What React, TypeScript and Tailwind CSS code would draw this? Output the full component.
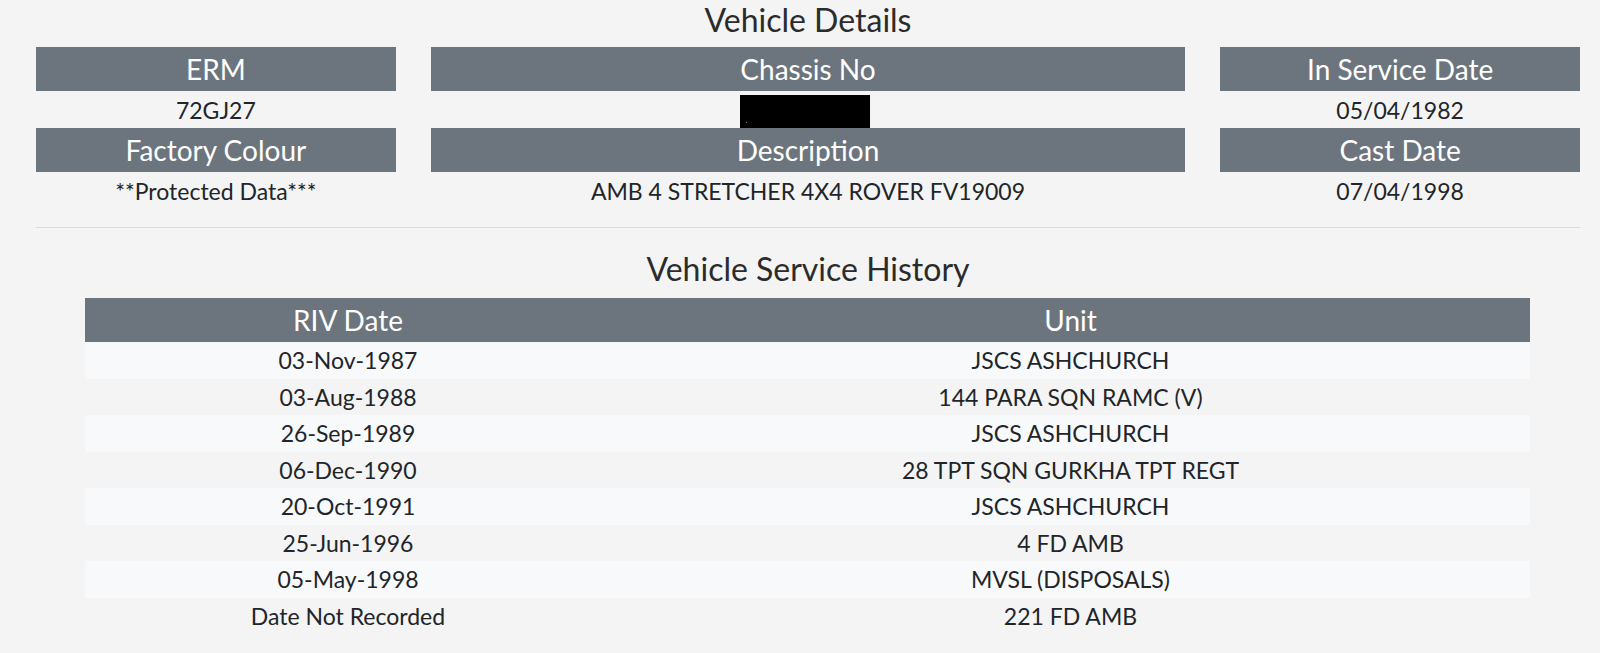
import React from "react";

const history: [string, string][] = [
  ["03-Nov-1987", "JSCS ASHCHURCH"],
  ["03-Aug-1988", "144 PARA SQN RAMC (V)"],
  ["26-Sep-1989", "JSCS ASHCHURCH"],
  ["06-Dec-1990", "28 TPT SQN GURKHA TPT REGT"],
  ["20-Oct-1991", "JSCS ASHCHURCH"],
  ["25-Jun-1996", "4 FD AMB"],
  ["05-May-1998", "MVSL (DISPOSALS)"],
  ["Date Not Recorded", "221 FD AMB"],
];

function Header({ children }: { children: React.ReactNode }) {
  return (
    <div className="h-[44px] bg-[#6c757d] text-white text-[28px] leading-[34px] flex items-center justify-center pb-[1px]">
      {children}
    </div>
  );
}

function Value({ children }: { children: React.ReactNode }) {
  return (
    <div className="h-[37px] text-[23px] leading-[28px] flex items-center justify-center">
      {children}
    </div>
  );
}

export default function App() {
  return (
    <div className="min-h-screen bg-[#f4f4f4] text-[#212529] font-['Lato',sans-serif]">
      <div className="pl-[36px] pr-[20px]">
        <h1 className="pt-[2px] text-[32px] leading-[36px] text-center text-[#2b2b2b]">Vehicle Details</h1>
        <div className="mt-[9px] grid grid-cols-4 gap-x-[35px]">
          <div className="flex flex-col">
            <Header>ERM</Header>
            <Value>72GJ27</Value>
            <Header>Factory Colour</Header>
            <Value>**Protected Data***</Value>
          </div>
          <div className="col-span-2 flex flex-col">
            <Header>Chassis No</Header>
            <div className="h-[37px] flex items-end justify-center">
              <div className="relative w-[130px] h-[33px] bg-black mr-[6px]">
                <span className="absolute left-[6px] bottom-[5px] w-[1px] h-[1px] bg-[#777]" />
              </div>
            </div>
            <Header>Description</Header>
            <Value>AMB 4 STRETCHER 4X4 ROVER FV19009</Value>
          </div>
          <div className="flex flex-col">
            <Header>In Service Date</Header>
            <Value>05/04/1982</Value>
            <Header>Cast Date</Header>
            <Value>07/04/1998</Value>
          </div>
        </div>
        <div className="mt-[18px] border-t border-[#dcdcdc]" />
        <h2 className="mt-[23px] text-[32px] leading-[36px] text-center text-[#2b2b2b]">Vehicle Service History</h2>
        <div className="mt-[11px] ml-[49px] mr-[50px]">
          <div className="grid grid-cols-[526px_1fr] h-[44px] bg-[#6c757d] text-white text-[28px] leading-[34px]">
            <div className="flex items-center justify-center pb-[1px]">RIV Date</div>
            <div className="flex items-center justify-center pb-[1px]">Unit</div>
          </div>
          {history.map(([d, u], i) => (
            <div
              key={i}
              className={
                "grid grid-cols-[526px_1fr] h-[36.5px] text-[23px] leading-[28px] " +
                (i % 2 === 0 ? "bg-[#f8f9fa]" : "bg-[#f4f4f4]")
              }
            >
              <div className="flex items-center justify-center">{d}</div>
              <div className="flex items-center justify-center">{u}</div>
            </div>
          ))}
        </div>
      </div>
    </div>
  );
}
